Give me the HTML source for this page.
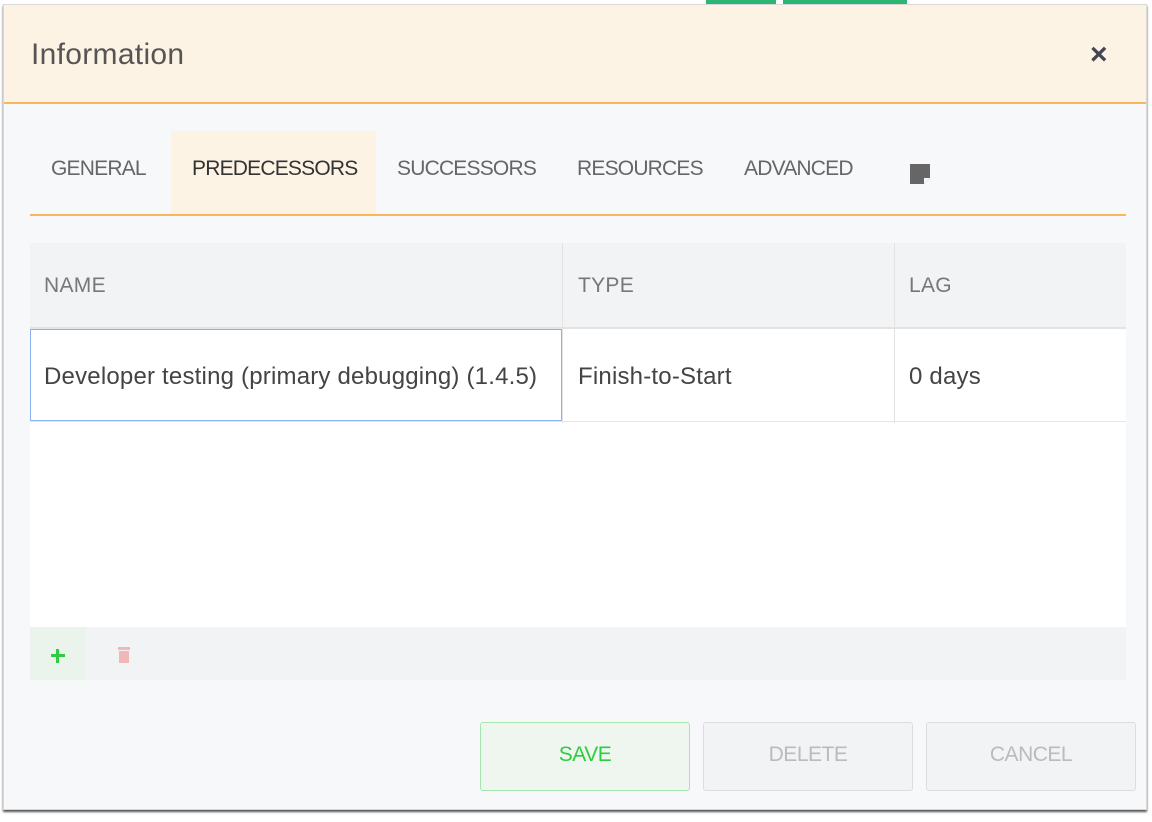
<!DOCTYPE html>
<html><head><style>
body{margin:0;width:1152px;height:822px;background:#fff;font-family:"Liberation Sans",sans-serif;position:relative;overflow:hidden}
.a{position:absolute}
.dlg{left:3px;top:4px;width:1142px;height:804px;background:#f7f8fa;border:1px solid #d8d8d8;box-shadow:0 2px 2px #555}
.hdr{left:0;top:0;width:1142px;height:97px;background:#fdf3e5;border-bottom:2px solid #fbb55c}
.tab{top:157px;font-size:21px;color:#666;letter-spacing:-0.8px}
.th{font-size:21px;color:#777;top:274px;letter-spacing:0.3px}
.td{font-size:24px;color:#444;top:363px;letter-spacing:0.2px}
.btn{top:722px;width:208px;height:67px;border:1px solid #ddd;background:#f2f3f5;border-radius:3px;font-size:21px;color:#bbb;text-align:center;line-height:63px;box-sizing:border-box;letter-spacing:-0.5px}
</style></head><body>
<div class="a" style="left:706px;top:0;width:70px;height:4px;background:#2bb673"></div>
<div class="a" style="left:783px;top:0;width:124px;height:4px;background:#2bb673"></div>
<div class="a dlg">
<div class="a hdr"></div>
<div class="a" style="left:27px;top:33px;font-size:30px;color:#555;letter-spacing:0.3px">Information</div>
<div class="a" style="left:1086px;top:33px;font-size:30px;font-weight:bold;color:#445">×</div>
</div>
<div class="a" style="left:171px;top:131px;width:205px;height:84px;background:#fdf3e5"></div>
<div class="a" style="left:30px;top:214px;width:1096px;height:2px;background:#fbb55c"></div>
<div class="a tab" style="left:51px">GENERAL</div>
<div class="a tab" style="left:192px;color:#333">PREDECESSORS</div>
<div class="a tab" style="left:397px">SUCCESSORS</div>
<div class="a tab" style="left:577px">RESOURCES</div>
<div class="a tab" style="left:744px">ADVANCED</div>
<svg class="a" style="left:909px;top:163px" width="22" height="22" viewBox="0 0 22 22"><path d="M1 1h20v14l-6 6H1z" fill="#666"/><path d="M15 21v-6h6" fill="#f7f8fa"/></svg>
<div class="a" style="left:30px;top:243px;width:1096px;height:437px;background:#fff"></div>
<div class="a" style="left:30px;top:243px;width:1096px;height:84px;background:#f2f3f5;border-bottom:2px solid #e3e3e3"></div>
<div class="a" style="left:562px;top:243px;width:1px;height:180px;background:#e3e3e3"></div>
<div class="a" style="left:894px;top:243px;width:1px;height:180px;background:#e3e3e3"></div>
<div class="a" style="left:30px;top:421px;width:1096px;height:1px;background:#e6e6e6"></div>
<div class="a" style="left:30px;top:329px;width:530px;height:90px;border:1px solid #8ab4f0"></div>
<div class="a th" style="left:44px">NAME</div>
<div class="a th" style="left:578px">TYPE</div>
<div class="a th" style="left:909px">LAG</div>
<div class="a td" style="left:44px;width:516px;overflow:hidden;white-space:nowrap">Developer testing (primary debugging) (1.4.5)</div>
<div class="a td" style="left:578px">Finish-to-Start</div>
<div class="a td" style="left:909px">0 days</div>
<div class="a" style="left:30px;top:627px;width:1096px;height:53px;background:#f2f3f5"></div>
<div class="a" style="left:30px;top:627px;width:56px;height:53px;background:#eaf3ec"></div>
<div class="a" style="left:51px;top:654px;width:14px;height:3px;background:#2ecc40"></div>
<div class="a" style="left:56px;top:649px;width:3px;height:14px;background:#2ecc40"></div>
<div class="a" style="left:118px;top:647px;width:12px;height:3px;background:#f0b8b8"></div>
<div class="a" style="left:119px;top:651px;width:10px;height:12px;background:#f0b8b8"></div>
<div class="a btn" style="left:480px;width:210px;height:69px;background:#eef6ef;border-color:#a8e6b0;color:#2ecc40">SAVE</div>
<div class="a btn" style="left:703px;width:210px;height:69px">DELETE</div>
<div class="a btn" style="left:926px;width:210px;height:69px">CANCEL</div>
</body></html>
